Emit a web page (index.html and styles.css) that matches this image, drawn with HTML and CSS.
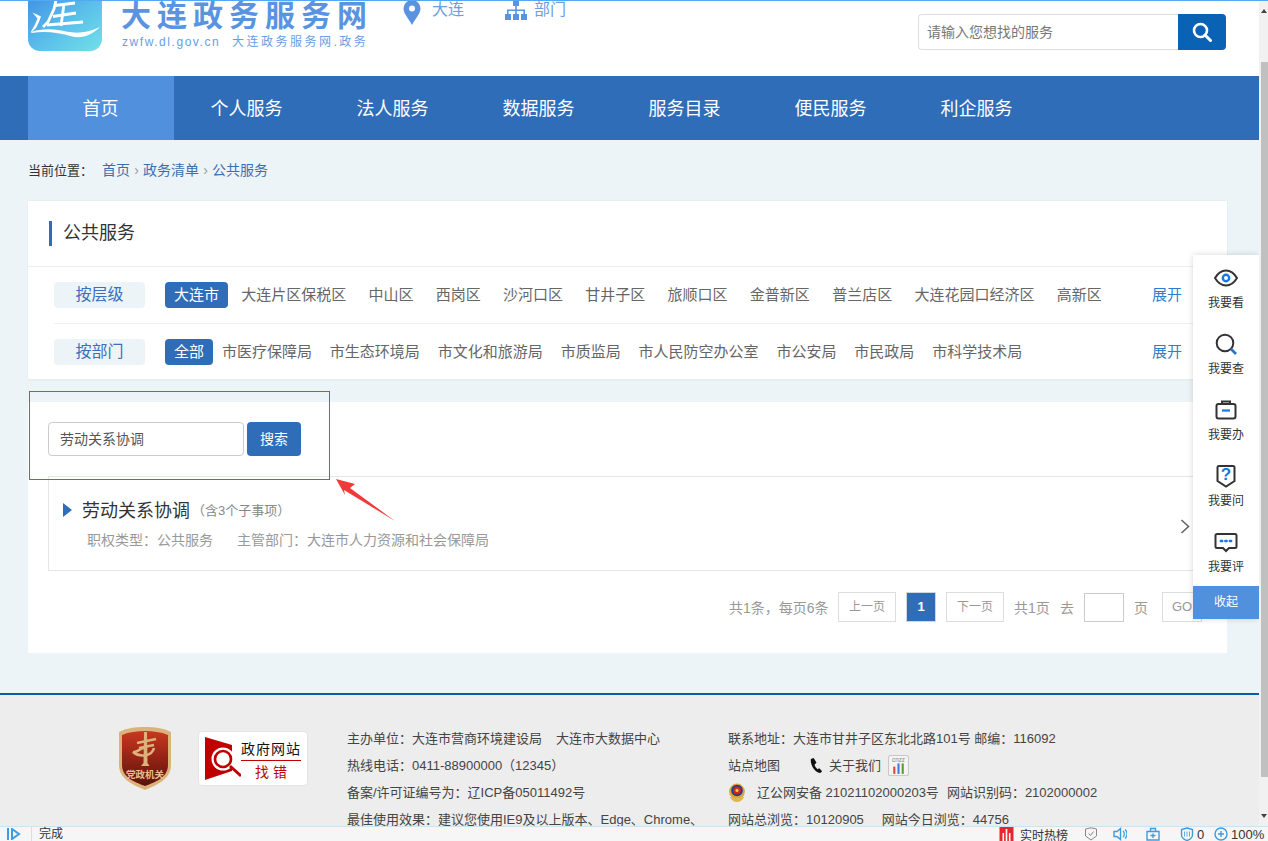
FILE: index.html
```html
<!DOCTYPE html>
<html lang="zh-CN">
<head>
<meta charset="utf-8">
<title>大连政务服务网</title>
<link rel="stylesheet" href="styles.css">
</head>
<body>
<div class="window">
  <div class="viewport">
    <div class="page">
      <header class="header">
        <div class="brand">
          <svg class="logo" viewBox="0 0 74 51" aria-hidden="true">
            <defs><linearGradient id="lg" x1="0" y1="0" x2="1" y2="1"><stop offset="0" stop-color="#3f8fe3"/><stop offset=".55" stop-color="#5cc0ea"/><stop offset="1" stop-color="#70e2e8"/></linearGradient></defs>
            <path d="M0-8H74V39a12 12 0 0 1-12 12H12A12 12 0 0 1 0 39Z" fill="url(#lg)"/>
            <path d="M4.500 12.500 13 16.500 11 22 8 28 3.500 32C9 29.500 20 28.500 30 30 42 32 52 36 72 27 64 35 54 39 44 36.500 30 32.500 18 31 3.500 33L3 31.500 7 24.500 9.500 18.500Z" fill="#fff"/>
            <path d="M28 0 26 9 20 22 15 27M27 5.500 47 3M25 16.500 48 13M36 4 33 26M19 25 55 22" fill="none" stroke="#fff" stroke-width="2.800"/>
          </svg>
          <div class="brand-text">
            <div class="brand-name">大连政务服务网</div>
            <div class="brand-sub"><span class="brand-url">zwfw.dl.gov.cn</span><span class="brand-cn">大连政务服务网.政务</span></div>
          </div>
        </div>
        <div class="locs">
          <span class="loc">
            <svg class="pin" viewBox="0 0 18 25" aria-hidden="true"><path fill-rule="evenodd" d="M9 0a8.500 8.500 0 0 1 8.500 8.500C17.500 14 12 19 9 25 6 19 .5 14 .5 8.500A8.500 8.500 0 0 1 9 0Zm0 5.500a3 3 0 1 0 0 6 3 3 0 0 0 0-6Z" fill="#5a94e0"/></svg>大连</span>
          <span class="loc dept">
            <svg class="org" viewBox="0 0 22 21" aria-hidden="true"><path d="M8 0h6v6h-6ZM10.200 6h1.600v4h-1.600ZM2 9.500h18v5h-1.600v-3.400H11.800v3.400h-1.600v-3.400H3.600v3.400H2ZM0 14h6v6H0ZM8 14h6v6H8ZM16 14h6v6h-6Z" fill="#5a94e0"/></svg>部门</span>
        </div>
        <div class="top-search">
          <div class="top-input">请输入您想找的服务</div>
          <div class="top-btn">
            <svg viewBox="0 0 20 20" aria-hidden="true"><circle cx="8.500" cy="8.500" r="6.500" fill="none" stroke="#fff" stroke-width="2.600"/><path d="M13 13l5.500 5.500" stroke="#fff" stroke-width="3" stroke-linecap="round"/></svg>
          </div>
        </div>
      </header>

      <nav class="nav">
        <a class="nav-item active">首页</a>
        <a class="nav-item">个人服务</a>
        <a class="nav-item">法人服务</a>
        <a class="nav-item">数据服务</a>
        <a class="nav-item">服务目录</a>
        <a class="nav-item">便民服务</a>
        <a class="nav-item">利企服务</a>
      </nav>

      <div class="content">
        <div class="crumbs">
          <span class="crumb-label">当前位置：</span><a>首页</a><i>›</i><a>政务清单</a><i>›</i><a>公共服务</a>
        </div>

        <section class="panel filters">
          <h2 class="panel-title"><span>公共服务</span></h2>
          <div class="filter-row first">
            <div class="filter-label">按层级</div>
            <div class="filter-items">
              <a class="pill">大连市</a>
              <a>大连片区保税区</a><a>中山区</a><a>西岗区</a><a>沙河口区</a><a>甘井子区</a><a>旅顺口区</a><a>金普新区</a><a>普兰店区</a><a>大连花园口经济区</a><a>高新区</a>
            </div>
            <a class="expand">展开</a>
          </div>
          <div class="filter-row second">
            <div class="filter-label">按部门</div>
            <div class="filter-items tight">
              <a class="pill">全部</a>
              <a>市医疗保障局</a><a>市生态环境局</a><a>市文化和旅游局</a><a>市质监局</a><a>市人民防空办公室</a><a>市公安局</a><a>市民政局</a><a>市科学技术局</a>
            </div>
            <a class="expand">展开</a>
          </div>
        </section>

        <section class="panel results">
          <div class="search">
            <div class="search-input">劳动关系协调</div>
            <div class="search-btn">搜索</div>
          </div>
          <div class="result">
            <div class="result-head">
              <span class="tri"></span>
              <span class="result-title">劳动关系协调</span>
              <span class="result-count">（含3个子事项）</span>
            </div>
            <div class="result-meta"><span>职权类型：公共服务</span><span>主管部门：大连市人力资源和社会保障局</span></div>
            <svg class="chev" viewBox="0 0 10 15" aria-hidden="true"><path d="M1.500 1l7 6.500-7 6.500" fill="none" stroke="#666" stroke-width="1.600"/></svg>
          </div>
          <div class="pager">
            <span class="pg-text">共1条，每页6条</span>
            <a class="pg-btn">上一页</a>
            <a class="pg-num">1</a>
            <a class="pg-btn">下一页</a>
            <span class="pg-total">共1页</span>
            <span class="pg-go">去</span>
            <span class="pg-input"></span>
            <span class="pg-page">页</span>
            <a class="pg-gobtn">GO</a>
          </div>
        </section>
      </div>

      <footer class="footer">
        <svg class="badge" viewBox="0 0 54 63" aria-hidden="true">
          <defs><linearGradient id="bd" x1="0" y1="0" x2="0" y2="1"><stop offset="0" stop-color="#c8381f"/><stop offset=".55" stop-color="#8e2114"/><stop offset="1" stop-color="#5a120b"/></linearGradient></defs>
          <path d="M27 0c9 0 19 1 26 5v33c0 14-14 20-26 25C15 58 1 52 1 38V5C8 1 18 0 27 0Z" fill="#dcb27c"/>
          <path d="M27 4c8 0 16 1 23 4v30c0 12-12 17-23 21C16 55 4 50 4 38V8C11 5 19 4 27 4Z" fill="url(#bd)"/>
          <path d="M26 5h3l.5 31 2 3H23l2.500-3Z" fill="#dcb27c"/>
          <path d="M19 16 38 12M21 21 36 18" fill="none" stroke="#dcb27c" stroke-width="2.400"/>
          <path d="M36 21C34 29 22 31 15 25 19 26 22 21 26 21" fill="none" stroke="#dcb27c" stroke-width="2.600"/>
          <text x="27" y="51" text-anchor="middle" class="badge-text">党政机关</text>
        </svg>
        <div class="jiucuo">
          <svg class="jc-mark" viewBox="0 0 36 44" aria-hidden="true">
            <path d="M0 0 27 8V34L0 43Z" fill="#c00000"/>
            <circle cx="18" cy="22" r="11.500" fill="#fff"/>
            <circle cx="18" cy="22" r="8" fill="#fff" stroke="#c00000" stroke-width="2.600"/>
            <path d="M25 29 36 39" stroke="#c00000" stroke-width="3"/>
          </svg>
          <div class="jc-text"><div class="jc-top">政府网站</div><div class="jc-bottom">找 错</div></div>
        </div>
        <div class="foot-col one">
          <p>主办单位：大连市营商环境建设局<span class="sp"></span>大连市大数据中心</p>
          <p>热线电话：0411-88900000（12345）</p>
          <p>备案/许可证编号为：辽ICP备05011492号</p>
          <p>最佳使用效果：建议您使用IE9及以上版本、Edge、Chrome、</p>
        </div>
        <div class="foot-col two">
          <p>联系地址：大连市甘井子区东北北路101号 邮编：116092</p>
          <p class="foot-links">站点地图
            <svg class="phone" viewBox="0 0 16 16" aria-hidden="true"><path d="M2 1l3-1 3 5-2 2c0 2 2 4 3 5l2-1 3 3-2 2C7 16 1 8 2 1Z" fill="#111"/></svg>
            <span>关于我们</span>
            <svg class="cnzz" viewBox="0 0 20 20" aria-hidden="true"><rect x=".5" y=".5" width="19" height="19" rx="2" fill="#f4f4f4" stroke="#c8c8c8"/><text x="10" y="7" text-anchor="middle" class="cnzz-t">cnzz</text><path d="M5 11h2v7H5Z" fill="#e2463a"/><path d="M9 8h2v10H9Z" fill="#3c7fd0"/><path d="M13 8h2v10h-2Z" fill="#5a9a2a"/></svg>
          </p>
          <p class="foot-police">
            <svg class="police" viewBox="0 0 16 20" aria-hidden="true"><circle cx="8" cy="9" r="7.500" fill="#d9a83c"/><path d="M1 14c2 4 5 5 7 5s5-1 7-5l-3 1H4Z" fill="#e4b54a"/><circle cx="8" cy="8" r="5.500" fill="#1f3c8f"/><circle cx="8" cy="8" r="3.800" fill="#c9281f"/><circle cx="8" cy="8" r="1.500" fill="#eec64a"/></svg>
            <span>辽公网安备 21021102000203号</span><span class="sid">网站识别码：2102000002</span>
          </p>
          <p>网站总浏览：10120905<span class="sp"></span>网站今日浏览：44756</p>
        </div>
      </footer>
    </div>

    <aside class="dock">
      <a class="dock-item">
        <svg viewBox="0 0 24 24" aria-hidden="true"><path d="M1 12c3-5 7-7.500 11-7.500S20 7 23 12c-3 5-7 7.500-11 7.500S4 17 1 12Z" fill="none" stroke="#333" stroke-width="2"/><circle cx="12" cy="12" r="3.200" fill="none" stroke="#1677e6" stroke-width="2.400"/></svg>
        <span>我要看</span></a>
      <a class="dock-item">
        <svg viewBox="0 0 24 24" aria-hidden="true"><circle cx="11" cy="11" r="8.300" fill="none" stroke="#333" stroke-width="2"/><path d="M17 17l5 5" stroke="#2a74c4" stroke-width="2.600"/></svg>
        <span>我要查</span></a>
      <a class="dock-item">
        <svg viewBox="0 0 24 24" aria-hidden="true"><path d="M8 6V3.500h8V6" fill="none" stroke="#333" stroke-width="2"/><rect x="2.500" y="6" width="19" height="14.500" rx="2" fill="none" stroke="#333" stroke-width="2"/><path d="M8 12.500h8" stroke="#1677e6" stroke-width="2.200"/></svg>
        <span>我要办</span></a>
      <a class="dock-item">
        <svg viewBox="0 0 24 24" aria-hidden="true"><path d="M5 2h14a1.500 1.500 0 0 1 1.500 1.500V17L12 22.500 3.500 17V3.500A1.500 1.500 0 0 1 5 2Z" fill="none" stroke="#333" stroke-width="2"/><text x="12" y="15.500" text-anchor="middle" class="q">?</text></svg>
        <span>我要问</span></a>
      <a class="dock-item">
        <svg viewBox="0 0 24 24" aria-hidden="true"><path d="M3 4h18a1.500 1.500 0 0 1 1.500 1.500v11A1.500 1.500 0 0 1 21 18h-6l-3 3-3-3H3a1.500 1.500 0 0 1-1.500-1.500v-11A1.500 1.500 0 0 1 3 4Z" fill="none" stroke="#333" stroke-width="2"/><path d="M6.800 11h1.400M11.300 11h1.400M15.800 11h1.400" stroke="#1677e6" stroke-width="2.400" stroke-linecap="round"/></svg>
        <span>我要评</span></a>
      <a class="dock-toggle">收起</a>
    </aside>

    <div class="mark-box"></div>
    <svg class="mark-arrow" viewBox="0 0 60 43" aria-hidden="true"><path d="M0 0 19 5 14 9 59 42 8 11 9 16Z" fill="#f03a3a"/></svg>
  </div>

  <div class="scrollbar">
    <span class="sb-up"></span>
    <span class="sb-thumb"></span>
    <span class="sb-down"></span>
  </div>
  <div class="topline"></div>

  <div class="statusbar">
    <svg class="st-play" viewBox="0 0 14 12" aria-hidden="true"><path d="M1 0v12" stroke="#3d9be0" stroke-width="2"/><path d="M5 1l7 5-7 5Z" fill="none" stroke="#3d9be0" stroke-width="2"/></svg>
    <span class="st-done">完成</span>
    <div class="st-right">
      <svg class="st-red" viewBox="0 0 14 14" aria-hidden="true"><rect width="14" height="14" fill="#e5272d"/><path d="M3 6h1.600v8H3ZM6.200 2h1.600v12H6.200ZM9.400 6H11v8H9.400Z" fill="#fff"/></svg>
      <span class="st-hot">实时热榜</span>
      <svg class="st-i shield" viewBox="0 0 14 14" aria-hidden="true"><path d="M1.500 2 7 .8 12.500 2v7L7 13 1.500 9Z" fill="none" stroke="#888"/><path d="M4.500 6.500 6.500 8.500 9.500 4.500" fill="none" stroke="#888"/></svg>
      <svg class="st-i sound" viewBox="0 0 14 14" aria-hidden="true"><path d="M1 4.500h3L7.500 1.500v11L4 9.500H1Z" fill="none" stroke="#3d9be0" stroke-width="1.400"/><path d="M10 4a4 4 0 0 1 0 6M12 2.500a6 6 0 0 1 0 9" fill="none" stroke="#3d9be0" stroke-width="1.200"/></svg>
      <svg class="st-i box" viewBox="0 0 14 14" aria-hidden="true"><path d="M1 4.500h12V13H1ZM4.500 4.500V1.500h5v3M7 6.500v4.500M4.500 8.500h5" fill="none" stroke="#3d9be0" stroke-width="1.400"/></svg>
      <svg class="st-i ie" viewBox="0 0 14 14" aria-hidden="true"><path d="M7 1 12.500 2.500V8C12.500 11 9 13 7 13.500 5 13 1.500 11 1.500 8V2.500Z" fill="none" stroke="#3d9be0" stroke-width="1.400"/><path d="M4.500 4.500v5M7 4.500v5M9.500 4.500v5" stroke="#3d9be0" stroke-width=".8"/></svg>
      <span class="st-zero">0</span>
      <svg class="st-i plus" viewBox="0 0 14 14" aria-hidden="true"><circle cx="7" cy="7" r="6" fill="none" stroke="#3d9be0" stroke-width="1.400"/><path d="M4 7h6M7 4v6" stroke="#3d9be0" stroke-width="1.400"/></svg>
      <span class="st-zoom">100%</span>
    </div>
  </div>
</div>
</body>
</html>
```

FILE: styles.css
```css
* { box-sizing: border-box; }
html, body { margin: 0; padding: 0; height: 100%; overflow: hidden; }
body { font-family: "Liberation Sans", "Noto Sans CJK SC", sans-serif; color: #333; background: #fff; }
a { color: inherit; text-decoration: none; }
p, h2 { margin: 0; font-weight: 400; }

.window { position: relative; width: 1268px; height: 841px; overflow: hidden; }
.viewport { position: absolute; left: 0; top: 0; width: 1259px; height: 826px; overflow: hidden; }
.page { width: 1259px; }

/* header */
.topline { position: absolute; left: 0; top: 0; width: 100%; height: 1px; background: #52a8f5; }
.header { height: 76px; padding: 0 33px 0 28px; display: flex; align-items: flex-start; background: #fff; }
.brand { display: flex; width: 374px; }
.logo { width: 74px; height: 51px; flex: none; display: block; }
.brand-text { margin-left: 19px; width: 260px; }
.brand-name { font-size: 30px; line-height: 32px; height: 32px; font-weight: 700; color: #5a94e0; letter-spacing: 6px; white-space: nowrap; }
.brand-sub { display: flex; margin-top: 1px; color: #6a9ee2; line-height: 18px; white-space: nowrap; }
.brand-url { font-size: 12px; letter-spacing: 1.550px; width: 111px; padding-left: 1px; }
.brand-cn { font-size: 12px; letter-spacing: 2.500px; }
.locs { display: flex; margin-left: 1px; color: #6a9ee2; font-size: 16px; line-height: 20px; }
.loc { display: flex; align-items: flex-start; gap: 11px; width: 102px; white-space: nowrap; }
.pin { width: 18px; height: 25px; flex: none; }
.org { width: 22px; height: 21px; flex: none; }
.dept { gap: 7px; }
.top-search { margin-left: auto; margin-top: 14px; display: flex; width: 308px; height: 36px; }
.top-input { width: 260px; border: 1px solid #ddd; border-right: 0; border-radius: 4px 0 0 4px; font-size: 14px; line-height: 34px; padding-left: 8px; color: #777; }
.top-btn { width: 48px; background: #0a62b4; border-radius: 0 4px 4px 0; display: flex; align-items: center; justify-content: center; }
.top-btn svg { width: 20px; height: 20px; }

/* nav */
.nav { height: 64px; background: #2f6db8; padding-left: 28px; display: flex; }
.nav-item { width: 146px; font-size: 18px; line-height: 64px; padding: 1px 1px 0 0; text-align: center; color: #fff; }
.nav-item.active { background: #5190dd; }

/* content */
.content { background: #edf4f8; padding: 0 32px 40px 28px; height: 553px; }
.crumbs { height: 61px; line-height: 60px; font-size: 14px; color: #3a6fb0; white-space: nowrap; }
.crumb-label { color: #333; display: inline-block; width: 74px; font-size: 13px; }
.crumbs i { font-style: normal; color: #999; display: inline-block; width: 13px; text-align: center; }
.panel { background: #fff; }
.filters { height: 179px; box-shadow: 0 0 1px rgba(0,0,0,.12); border-bottom: 1px solid #e7ecef; }
.panel-title { height: 66px; padding: 20px 0 0 21px; border-bottom: 1px solid #eee; }
.panel-title span { display: block; border-left: 3px solid #2f6db8; height: 25px; padding-left: 12px; font-size: 18px; line-height: 24px; color: #333; text-indent: -1px; }
.filter-row { display: flex; align-items: center; margin-left: 26px; white-space: nowrap; }
.filter-row.first { height: 57px; border-bottom: 1px solid #eee; }
.filter-row.second { height: 56px; }
.filter-label { width: 91px; height: 26px; border-radius: 4px; background: #edf4f8; color: #3a6fba; font-size: 16px; line-height: 25px; text-align: center; flex: none; }
.filter-items { display: flex; align-items: center; margin-left: 20px; font-size: 15px; color: #666; gap: 22.250px; width: 987px; }
.filter-items a { height: 26px; line-height: 25px; }
.filter-items.tight { gap: 17.900px; }
.filter-items .pill { padding: 0 9px; background: #2f6db8; color: #fff; border-radius: 4px; margin-right: -9px; }
.expand { font-size: 15px; height: 26px; line-height: 25px; color: #2b7fc4; }

.results { margin-top: 22px; height: 251px; padding: 20px 20px 0 20px; }
.search { display: flex; gap: 3px; height: 34px; }
.search-input { width: 196px; border: 1px solid #ccc; border-radius: 4px; font-size: 14px; line-height: 32px; padding-left: 11px; color: #555; }
.search-btn { width: 54px; background: #2f6db8; border-radius: 4px; color: #fff; font-size: 14px; line-height: 34px; text-align: center; }
.result { position: relative; margin-top: 20px; height: 95px; border: 1px solid #e5e5e5; padding: 17px 14px 0; }
.result-head { display: flex; align-items: center; height: 30px; white-space: nowrap; }
.tri { width: 0; height: 0; border-left: 9px solid #2f6db8; border-top: 7px solid transparent; border-bottom: 7px solid transparent; margin: 2px 10px 0 0; }
.result-title { font-size: 18px; color: #333; }
.result-count { font-size: 13px; color: #888; margin-left: 2px; }
.result-meta { display: flex; gap: 24px; margin: 6px 0 0 24px; font-size: 14px; line-height: 20px; color: #999; white-space: nowrap; }
.chev { position: absolute; right: 16px; top: 42px; width: 10px; height: 15px; }
.pager { display: flex; align-items: center; height: 30px; margin-top: 21px; margin-left: 681px; font-size: 14px; color: #999; white-space: nowrap; }
.pg-text { width: 109px; }
.pg-btn { width: 58px; height: 30px; border: 1px solid #ddd; line-height: 28px; text-align: center; font-size: 12px; }
.pg-num { width: 30px; height: 30px; margin: 0 10px; background: #2f6db8; border: 1px solid #cfd8e2; color: #fff; font-size: 13px; font-weight: 700; line-height: 28px; text-align: center; }
.pg-total { margin-left: 10px; width: 46px; }
.pg-go { width: 24px; }
.pg-input { width: 40px; height: 29px; border: 1px solid #ccc; }
.pg-page { margin-left: 10px; width: 28px; }
.pg-gobtn { width: 40px; height: 30px; border: 1px solid #ddd; line-height: 28px; text-align: center; font-size: 13px; flex: none; }

/* footer */
.footer { position: relative; height: 133px; background: #ededed; border-top: 2px solid #0a5cab; padding: 26px 0 0 118px; display: flex; align-items: flex-start; font-size: 13px; color: #444; white-space: nowrap; }
.badge { width: 54px; height: 63px; flex: none; margin-top: 6px; }
.badge-text { font-size: 9.500px; font-weight: 700; fill: #e6c18f; font-family: "Noto Sans CJK SC", sans-serif; }
.jiucuo { width: 110px; height: 55px; margin: 10px 0 0 26px; flex: none; background: #fff; border: 1px solid #e4e4e4; border-radius: 4px; display: flex; padding: 5px 5px 4px 6px; }
.jc-mark { width: 36px; height: 44px; flex: none; }
.jc-text { width: 60px; color: #111; text-align: center; flex: none; }
.jc-top { font-size: 14px; line-height: 25px; height: 24px; border-bottom: 1px solid #c00000; white-space: nowrap; letter-spacing: 1px; }
.jc-bottom { font-size: 14px; line-height: 22px; color: #c00000; }
.foot-col { flex: none; }
.foot-col p { height: 27px; line-height: 27px; display: flex; align-items: center; }
.foot-col.one { margin-left: 39px; width: 381px; margin-top: 4px; }
.foot-col.two { margin-top: 4px; }
.sp { display: inline-block; width: 14px; }
.foot-col.two .sp { width: 18px; }
.phone { width: 15px; height: 15px; margin-left: 29px; margin-right: 5px; }
.cnzz { width: 21px; height: 21px; margin-left: 7px; }
.cnzz-t { font-size: 6px; fill: #888; font-family: "Liberation Sans", sans-serif; }
.police { width: 18px; height: 21px; margin-right: 11px; flex: none; }
.sid { margin-left: 8px; }

/* dock */
.dock { position: absolute; left: 1193px; top: 255px; width: 66px; height: 364px; background: #fff; box-shadow: 0 0 6px rgba(0,0,0,.16); display: flex; flex-direction: column; align-items: center; padding-top: 11px; }
.dock-item { width: 100%; height: 54px; margin-bottom: 12px; display: flex; flex-direction: column; align-items: center; color: #333; font-size: 12px; line-height: 17px; flex: none; }
.dock-item:nth-child(5) { margin-bottom: 0; }
.dock-item svg { width: 24px; height: 24px; margin-bottom: 5px; flex: none; }
.q { font-size: 17px; font-weight: 700; fill: #1677e6; font-family: "Liberation Sans", sans-serif; }
.dock-toggle { margin-top: auto; width: 100%; height: 33px; background: #5190dd; color: #fff; font-size: 12px; line-height: 32px; text-align: center; flex: none; }

/* annotation */
.mark-box { position: absolute; left: 29px; top: 391px; width: 301px; height: 89px; border: 1px solid #ea3a3a; }
.mark-arrow { position: absolute; left: 336px; top: 479px; width: 60px; height: 43px; }

/* scrollbar */
.scrollbar { position: absolute; left: 1259px; top: 1px; width: 9px; height: 825px; background: #f1f1f1; }
.sb-up { position: absolute; left: 2px; top: 8px; border: 3px solid transparent; border-bottom: 4px solid #444; border-top: 0; }
.sb-thumb { position: absolute; left: 2px; right: 0; top: 61px; height: 715px; background: #c0c0c0; }
.sb-down { position: absolute; left: 2px; top: 813px; border: 3px solid transparent; border-top: 4px solid #444; border-bottom: 0; }

/* status bar */
.statusbar { position: absolute; left: 0; top: 826px; width: 100%; height: 15px; background: #f6f6f6; border-top: 1px solid #cbe4f3; display: flex; align-items: center; font-size: 12px; color: #333; white-space: nowrap; }
.st-play { width: 14px; height: 12px; margin-left: 7px; }
.st-done { margin-left: 10px; padding-left: 7px; border-left: 1px solid #ddd; line-height: 14px; }
.st-right { margin-left: auto; display: flex; align-items: center; width: 269px; }
.st-red { width: 15px; height: 14px; flex: none; }
.st-hot { margin-left: 6px; width: 48px; flex: none; }
.st-i { width: 14px; height: 14px; flex: none; }
.shield { margin-left: 16px; }
.sound { margin-left: 15px; }
.box { margin-left: 19px; }
.ie { margin-left: 20px; }
.st-zero { margin-left: 3px; width: 8px; font-size: 13px; flex: none; }
.plus { margin-left: 9px; }
.st-zoom { margin-left: 3px; width: 40px; font-size: 13px; flex: none; }
```
